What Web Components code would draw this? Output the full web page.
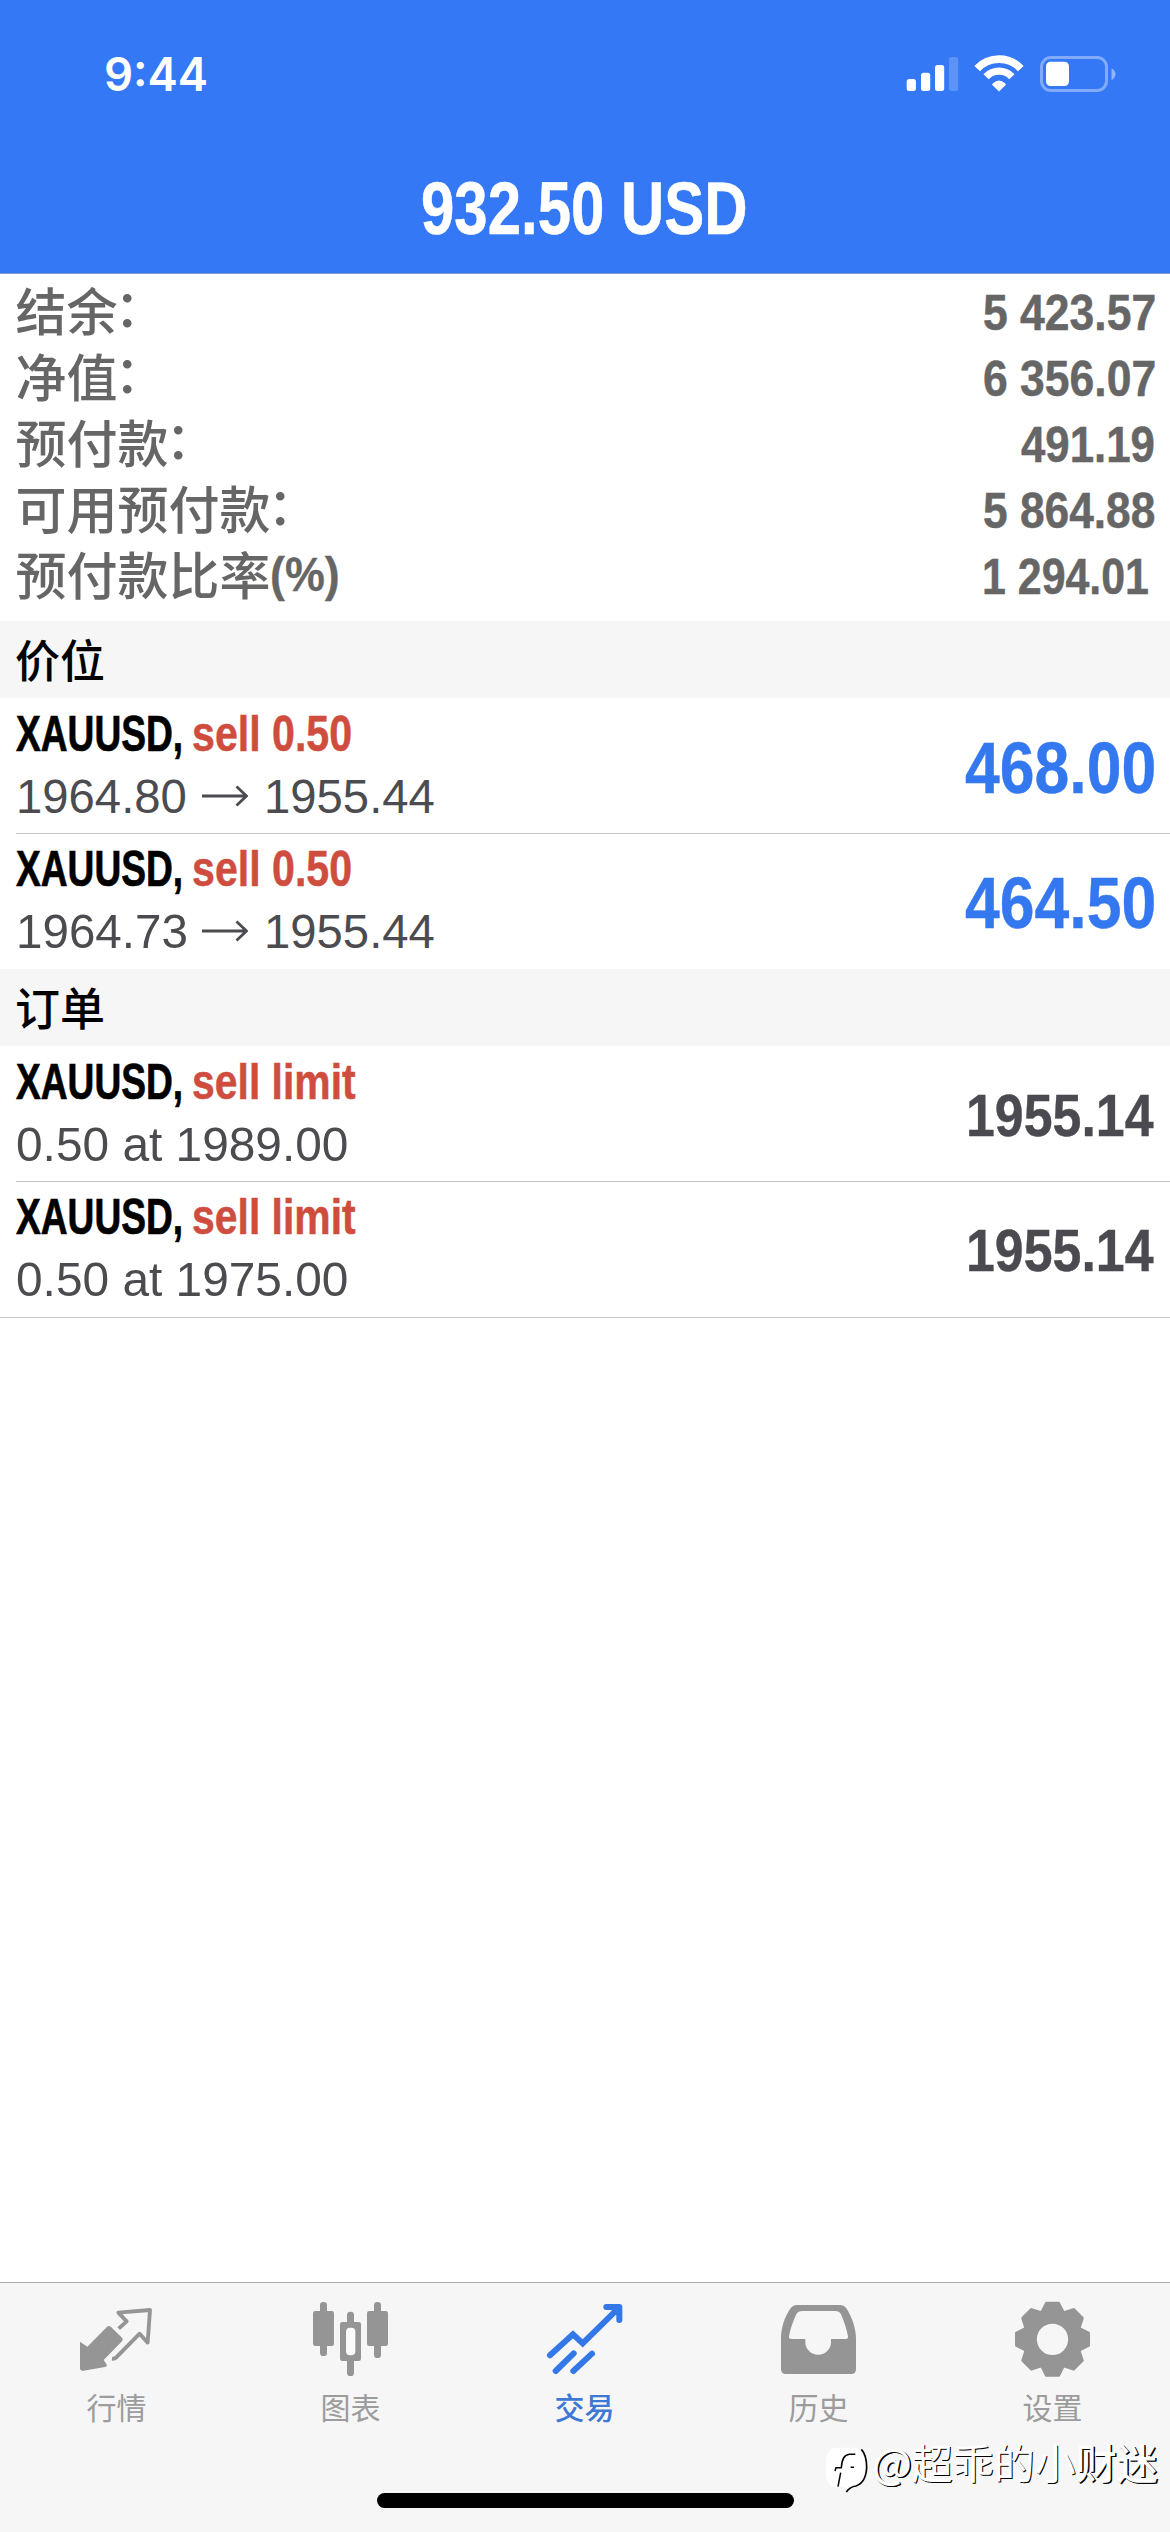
<!DOCTYPE html>
<html lang="zh-CN">
<head>
<meta charset="utf-8">
<title>交易</title>
<style>
html,body{margin:0;padding:0;background:#fff}
body{width:1170px;height:2532px;overflow:hidden;font-family:"Liberation Sans","Noto Sans CJK SC",sans-serif}
</style>
</head>
<body>
<trade-screen></trade-screen>
<script>
const pen = document.createElement('canvas').getContext('2d');
const CN = '"Noto Sans CJK SC",sans-serif';

/* One line of text whose ink is condensed to an exact width. */
class FitText extends HTMLElement {
  connectedCallback() {
    const root = this.attachShadow({mode: 'open'});
    const w = +this.getAttribute('w'), s = this.getAttribute('size');
    const weight = this.getAttribute('weight') || '700';
    const fam = this.getAttribute('family') || '"Liberation Sans Narrow","Liberation Sans",sans-serif';
    const bold = this.getAttribute('bolder') || 0;
    pen.font = `${weight} ${s}px ${fam}`;
    const m = pen.measureText(this.textContent);
    const ink = m.actualBoundingBoxLeft + m.actualBoundingBoxRight;
    const k = w / ink;
    root.innerHTML = `<style>
      :host{display:block;flex:none;width:${w}px;height:${s}px}
      span{display:block;width:0;white-space:pre;font:${weight} ${s}px/1 ${fam};-webkit-text-stroke:${bold}px currentColor;
        margin-left:${m.actualBoundingBoxLeft * k}px;transform-origin:0 0;transform:scaleX(${k})}
    </style><span><slot></slot></span>`;
  }
}
customElements.define('fit-text', FitText);

class StatusBar extends HTMLElement {
  connectedCallback() {
    this.attachShadow({mode: 'open'}).innerHTML = `<style>
      :host{display:flex;justify-content:space-between;height:130px;padding:0 50px 0 105.5px;box-sizing:border-box}
      fit-text{margin-top:51px}
      svg{display:block;margin-top:50px}
    </style>
    <fit-text w="100.5" size="46" weight="600" family="Inter,sans-serif">9:44</fit-text>
    <svg width="220" height="46" viewBox="900 50 220 46" fill="#fff">
      <rect x="906.7" y="79" width="9.2" height="12" rx="2.5"/>
      <rect x="921" y="72.7" width="9.2" height="18.3" rx="2.5"/>
      <rect x="935" y="65" width="9.2" height="26" rx="2.5"/>
      <rect x="949" y="57" width="9.2" height="34" rx="2.5" opacity=".2"/>
      <g fill="none" stroke="#fff">
        <path stroke-width="7.8" d="M977.2 68.6A30 30 0 0 1 1020.8 68.6"/>
        <path stroke-width="7.3" d="M986.1 76.7A17.8 17.8 0 0 1 1011.9 76.7"/>
      </g>
      <path d="M999 91.5L992.3 85Q992 84 993 83.2Q999 78 1005 83.2Q1006 84 1005.7 85Z"/>
      <rect x="1041.5" y="57.5" width="65" height="33" rx="9.5" fill="none" stroke="#fff" stroke-width="3" opacity=".38"/>
      <path d="M1111.5 68.5Q1115.5 70.5 1115.5 74.3T1111.5 80Z" opacity=".45"/>
      <rect x="1046" y="61.8" width="23" height="24.2" rx="4.5"/>
    </svg>`;
  }
}
customElements.define('status-bar', StatusBar);

class ProfitHeader extends HTMLElement {
  connectedCallback() {
    this.attachShadow({mode: 'open'}).innerHTML = `<style>
      :host{display:block;height:274px;box-sizing:border-box;background:#3478f6;border-bottom:1px solid #7e9bcd;color:#fff}
      .t{display:flex;justify-content:center;padding:41.5px 3px 0 0}
    </style><status-bar></status-bar>
    <div class="t"><fit-text w="322.5" size="73.5" bolder=".6">${this.getAttribute('total')}</fit-text></div>`;
  }
}
customElements.define('profit-header', ProfitHeader);

class SummaryRow extends HTMLElement {
  connectedCallback() {
    const a = n => this.getAttribute(n);
    this.attachShadow({mode: 'open'}).innerHTML = `<style>
      :host{display:flex;height:66px;padding:0 16px 0 15.5px;color:#666}
      .l{display:flex;font:500 51px/51px ${CN};white-space:nowrap}
      .c{margin:-4px 0 0 -3px}
      .v{margin:4px ${a('end') || 0}px 0 auto}
      .s{margin:2.5px 0 0 1px}
    </style><div class="l"><slot></slot>${a('suffix') ? `<fit-text class="s" w="66" size="48" bolder=".3">${a('suffix')}</fit-text>` : '<span class="c">：</span>'}</div>
    <fit-text class="v" w="${a('w')}" size="50.5" bolder=".5">${a('value')}</fit-text>`;
  }
}
customElements.define('summary-row', SummaryRow);

class SectionTitle extends HTMLElement {
  connectedCallback() {
    this.attachShadow({mode: 'open'}).innerHTML = `<style>
      :host{display:block;box-sizing:border-box;height:77px;padding:14.5px 15px 0;background:#f6f6f6;color:#000;font:500 45px/45px ${CN}}
    </style><slot></slot>`;
  }
}
customElements.define('section-title', SectionTitle);

class DealRow extends HTMLElement {
  connectedCallback() {
    const a = n => this.getAttribute(n), size = a('vs');
    const second = a('to')
      ? `<fit-text w="167" size="48.5" weight="400" style="margin-left:3px">${a('from')}</fit-text>
         <svg width="46" height="22" viewBox="0 0 46 22" fill="none" stroke="#4b4b50" stroke-width="2.8"><path d="M0 11H44M34.5 1.5L44.5 11L34.5 20.5"/></svg>
         <fit-text w="167" size="48.5" weight="400">${a('to')}</fit-text>`
      : `<fit-text w="330.5" size="48.5" weight="400" style="margin-left:1px">${a('from')}</fit-text>`;
    this.attachShadow({mode: 'open'}).innerHTML = `<style>
      :host{display:flex;justify-content:space-between;box-sizing:border-box;height:${a('h')}px;margin-left:16px;padding-right:16px;
        background:${a('line') !== null ? 'linear-gradient(#c4c4c6,#c4c4c6) 0 0/100% 1px no-repeat' : 'none'}}
      .a{display:flex;gap:12px;padding-top:10.500px;height:50px;color:#000}
      .red{color:#cf4d3e}
      .b{display:flex;padding-top:13.500px;color:#4b4b50}
      svg{display:block;margin:12.500px 19px 0 16px}
      .v{margin-top:${a('vt')}px;color:${a('vc')}}
    </style>
    <div><div class="a"><fit-text w="165" size="49.5" bolder=".7">XAUUSD,</fit-text><fit-text class="red" w="${a('sw')}" size="49.5" bolder=".5">${a('side')}</fit-text></div>
    <div class="b">${second}</div></div>
    <fit-text class="v" w="${a('vw')}" size="${size}" bolder=".4">${a('value')}</fit-text>`;
  }
}
customElements.define('deal-row', DealRow);

const ICONS = {
  quotes: `<svg viewBox="0 69 702 324"><path d="M240 245L262 260L320 202Q326 195 333 201L366 233Q371 239 366 244L311 300L319 312Q323 319 315 321L250 332Q240 333 240 325Z"/>
    <path fill="none" stroke="currentColor" stroke-width="11.5" stroke-linejoin="round" d="M356 206L380 184L355 158L450 150L443 248L419 221L348 293Q344 297 336 296"/></svg>`,
  charts: `<svg viewBox="702 69 702 324"><rect x="960" y="126" width="21" height="162" rx="10"/><rect x="939" y="153" width="63" height="105" rx="7"/>
    <rect x="1122" y="126" width="21" height="168" rx="10"/><rect x="1101" y="153" width="63" height="105" rx="7"/>
    <rect x="1041" y="155" width="21" height="193" rx="10"/><rect x="1020" y="186" width="63" height="117" rx="7"/><rect x="1038" y="203" width="28" height="83" rx="12" fill="#fbfbfb"/></svg>`,
  trade: `<svg viewBox="84 69 702 324"><g fill="none" stroke="currentColor" stroke-width="18" stroke-linecap="round"><path d="M330 286L399 223L428 250L534 146"/><path stroke-linejoin="round" d="M499 141H538V180"/><path d="M347 333L401 280M400 333L456 281"/></g><path d="M505 141H538V174Z"/></svg>`,
  history: `<svg viewBox="786 69 702 324"><path fill-rule="evenodd" d="M1070 135H1201Q1212 135 1218 143C1238 172 1248 210 1248 235V328Q1248 342 1234 342H1037Q1023 342 1023 328V235C1023 205 1033 170 1053 143Q1059 135 1070 135ZM1087 153Q1074 153 1069 163C1060 182 1051 206 1047 229Q1046 237 1054 237H1096V246A38.5 38.5 0 0 0 1173 246V237H1217Q1225 237 1224 229C1220 206 1211 182 1203 163Q1198 153 1185 153Z"/></svg>`,
  settings: `<svg viewBox="408 69 702 324"><g transform="translate(757.5 238)"><circle r="67" fill="none" stroke="currentColor" stroke-width="40"/>
    <g stroke="currentColor" stroke-width="10" stroke-linejoin="round">${[0,45,90,135,180,225,270,315].map(d => `<path transform="rotate(${d})" d="M-18 -107.500H18L33 -78H-33Z"/>`).join('')}</g></g></svg>`
};

class TabItem extends HTMLElement {
  connectedCallback() {
    const on = this.hasAttribute('active');
    this.attachShadow({mode: 'open'}).innerHTML = `<style>
      :host{display:flex;flex-direction:column;align-items:center;flex:1;color:${on ? '#3478e8' : '#959595'}}
      svg{display:block;width:234px;height:108px;fill:currentColor}
      span{font:${on ? 500 : 400} 30px/30px ${CN};margin-right:1px;color:${on ? '#3c78d4' : '#9c9c9c'}}
    </style>${ICONS[this.getAttribute('icon')]}<span><slot></slot></span>`;
  }
}
customElements.define('tab-item', TabItem);

class TabBar extends HTMLElement {
  connectedCallback() {
    this.attachShadow({mode: 'open'}).innerHTML = `<style>
      :host{display:flex;flex-direction:column;box-sizing:border-box;height:250px;border-top:1px solid #adadad;background:#f6f6f6}
      nav{display:flex;height:210px}
      i{display:block;width:417px;height:15px;border-radius:7.5px;background:#000;align-self:center}
    </style><nav><slot></slot></nav><i></i>`;
  }
}
customElements.define('tab-bar', TabBar);

/* Author credit laid over the corner of the screen. */
class AuthorMark extends HTMLElement {
  connectedCallback() {
    this.attachShadow({mode: 'open'}).innerHTML = `<style>
      :host{position:absolute;left:826px;top:2436px;display:flex;align-items:flex-start;color:#fff}
      svg{display:block;margin-top:9px}
      div{font:400 41px/50px ${CN};text-shadow:1px 1px .6px #000;white-space:nowrap;margin-left:4px}
      b{font-weight:500;text-shadow:1.5px 1px .4px #000,1px 1px 0 #000}
    </style>
    <svg width="42" height="50" viewBox="78 555 126 150"><path fill="#fff" d="M110 563H165Q200 570 200 620Q200 675 165 680L140 694L135 680H100Q78 675 78 640V600Q80 565 110 563Z"/>
      <g fill="none" stroke="#000"><path stroke-width="4.500" d="M105 633L108 623H124Q126 585 148 583H166"/><path stroke-width="4.500" d="M122 638L114 680M152 622H162"/><path stroke-width="5" d="M184 568Q200 585 200 622Q198 668 168 678Q150 680 139 696"/></g></svg>
    <div><b>@</b>超乖的小<b>财迷</b></div>`;
  }
}
customElements.define('author-mark', AuthorMark);

class TradeScreen extends HTMLElement {
  connectedCallback() {
    this.attachShadow({mode: 'open'}).innerHTML = `<style>
      :host{display:flex;flex-direction:column;position:relative;width:1170px;height:2532px;background:#fff;overflow:hidden}
      .sum{height:347px;box-sizing:border-box;padding-top:10px}
      main{flex:1}
      hr{border:0;margin:0;height:1px;background:#c8c8ca}
    </style>
    <profit-header total="932.50 USD"></profit-header>
    <main>
      <div class="sum">
        <summary-row value="5 423.57" w="170.5">结余</summary-row>
        <summary-row value="6 356.07" w="170.5">净值</summary-row>
        <summary-row value="491.19" w="133">预付款</summary-row>
        <summary-row value="5 864.88" w="170.5">可用预付款</summary-row>
        <summary-row value="1 294.01" w="163.5" end="6" suffix="(%)">预付款比率</summary-row>
      </div>
      <section-title>价位</section-title>
      <deal-row h="135" side="sell 0.50" sw="158" from="1964.80" to="1955.44" value="468.00" vs="72" vw="188.5" vt="34" vc="#3478f0"></deal-row>
      <deal-row h="136" line side="sell 0.50" sw="158" from="1964.73" to="1955.44" value="464.50" vs="72" vw="188.5" vt="34" vc="#3478f0"></deal-row>
      <section-title>订单</section-title>
      <deal-row h="135" side="sell limit" sw="162.500" from="0.50 at 1989.00" value="1955.14" vs="60" vw="185.5" vt="40" vc="#4a4a50"></deal-row>
      <deal-row h="136" line side="sell limit" sw="162.500" from="0.50 at 1975.00" value="1955.14" vs="60" vw="185.5" vt="40" vc="#4a4a50"></deal-row>
      <hr>
    </main>
    <tab-bar>
      <tab-item icon="quotes">行情</tab-item>
      <tab-item icon="charts">图表</tab-item>
      <tab-item icon="trade" active>交易</tab-item>
      <tab-item icon="history">历史</tab-item>
      <tab-item icon="settings">设置</tab-item>
    </tab-bar>
    <author-mark></author-mark>`;
  }
}
customElements.define('trade-screen', TradeScreen);
</script>
</body>
</html>
